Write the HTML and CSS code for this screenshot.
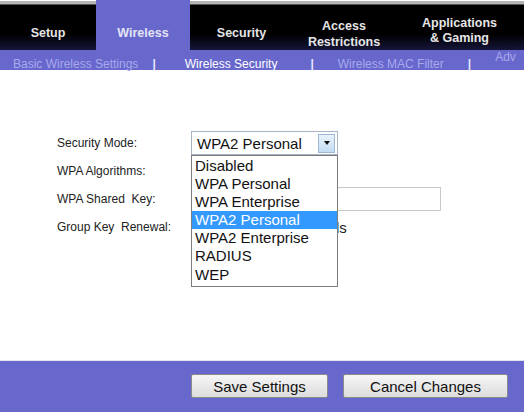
FILE: index.html
```html
<!DOCTYPE html>
<html>
<head>
<meta charset="utf-8">
<title>Wireless Security</title>
<link rel="stylesheet" href="styles.css">
</head>
<body>
<div class="page">
  <nav class="tabs">
    <div class="tab tab-setup">Setup</div>
    <div class="tab tab-wireless active">Wireless</div>
    <div class="tab tab-security">Security</div>
    <div class="tab tab-access">Access<br>Restrictions</div>
    <div class="tab tab-apps">Applications<br>&amp; Gaming</div>
  </nav>
  <div class="subnav">
    <span class="sub sub-basic">Basic Wireless Settings</span>
    <span class="sep sep-1">|</span>
    <span class="sub sub-current">Wireless Security</span>
    <span class="sep sep-2">|</span>
    <span class="sub sub-mac">Wireless MAC Filter</span>
    <span class="sep sep-3">|</span>
    <span class="sub sub-adv">Adv</span>
  </div>
  <main class="content">
    <div class="form">
      <div class="label">Security Mode:</div>
      <div class="field select-cell">
        <div class="select">
          <span class="select-value">WPA2 Personal</span>
          <span class="select-btn"><span class="arrow"></span></span>
        </div>
        <ul class="options">
          <li>Disabled</li>
          <li>WPA Personal</li>
          <li>WPA Enterprise</li>
          <li class="selected">WPA2 Personal</li>
          <li>WPA2 Enterprise</li>
          <li>RADIUS</li>
          <li>WEP</li>
        </ul>
      </div>
      <div class="label">WPA Algorithms:</div>
      <div class="field"></div>
      <div class="label">WPA Shared&nbsp; Key:</div>
      <div class="field"><div class="textbox"></div></div>
      <div class="label">Group Key&nbsp; Renewal:</div>
      <div class="field renewal"><span class="unit">seconds</span></div>
    </div>
  </main>
  <footer class="footer">
    <button class="btn btn-save">Save Settings</button>
    <button class="btn btn-cancel">Cancel Changes</button>
  </footer>
</div>
</body>
</html>
```
FILE: styles.css
```css
html, body {
  margin: 0;
  padding: 0;
  background: #fff;
}

.page {
  width: 524px;
  height: 412px;
  display: flex;
  flex-direction: column;
  overflow: hidden;
  font-family: "Liberation Sans", Arial, sans-serif;
}

/* top tab bar */
.tabs {
  height: 50px;
  flex: none;
  display: flex;
  background:
    linear-gradient(#fff 0 1px, #b4b4b4 1px 4px, #000 5px, #000 34px, #15153a 50px);
}

.tab {
  display: flex;
  align-items: center;
  justify-content: center;
  text-align: center;
  color: #e6e6e6;
  font-weight: bold;
  font-size: 12.5px;
  line-height: 15px;
  padding-top: 16px;
  box-sizing: border-box;
}

.tab-setup { width: 96px; }
.tab-wireless { width: 94px; }
.tab-security { width: 103px; }
.tab-access { width: 102px; padding-top: 17px; line-height: 16px; }
.tab-apps { width: 129px; padding-top: 12px; }

.tab.active {
  background: #6767cc;
  color: #e4e4f4;
}

/* second level links */
.subnav {
  height: 20px;
  flex: none;
  box-sizing: border-box;
  padding-top: 8px;
  background: #6767cc;
  display: flex;
  align-items: flex-start;
  font-size: 12px;
  line-height: 12px;
  color: #a9a9ee;
  white-space: nowrap;
}

.sub-basic { margin-left: 13px; }
.sep { color: #e8e8ff; font-weight: bold; }
.sep-1 { margin-left: 14px; }
.sub-current { margin-left: 29px; color: #fff; }
.sep-2 { margin-left: 33px; }
.sub-mac { margin-left: 24px; }
.sep-3 { margin-left: 24px; }
.sub-adv { margin-left: 24px; position: relative; top: -7px; }

/* form area */
.content {
  flex: 1;
  padding-top: 59px;
  box-sizing: border-box;
}

.form {
  display: grid;
  grid-template-columns: 134px 1fr;
  grid-auto-rows: 28px;
  margin-left: 57px;
}

.label {
  font-size: 12px;
  color: #222;
  display: flex;
  align-items: center;
  white-space: nowrap;
}

.field {
  display: flex;
  align-items: center;
  position: relative;
}

.select-cell { align-items: flex-start; padding-top: 2px; }

.select {
  width: 147px;
  height: 24px;
  box-sizing: border-box;
  border: 1px solid #a8b4c6;
  display: flex;
  align-items: center;
  background: #fff;
}

.select-value {
  flex: 1;
  font-size: 15px;
  padding-left: 5px;
  color: #111;
}

.select-btn {
  width: 17px;
  height: 19px;
  margin-right: 2px;
  box-sizing: border-box;
  border: 1px solid #9fb8d6;
  background: linear-gradient(#e8f2fc, #c4dcf4);
  display: flex;
  align-items: center;
  justify-content: center;
}

.arrow {
  width: 0;
  height: 0;
  border-left: 3.5px solid transparent;
  border-right: 3.5px solid transparent;
  border-top: 4px solid #111;
}

/* open option list drawn over the rows below */
.options {
  position: absolute;
  left: 0;
  top: 26px;
  z-index: 2;
  width: 147px;
  box-sizing: border-box;
  margin: 0;
  padding: 1px 0 2px;
  list-style: none;
  background: #fff;
  border: 1px solid #7c7c7c;
  font-size: 15px;
  color: #111;
}

.options li {
  height: 18.1px;
  line-height: 18px;
  padding-left: 3px;
}

.options li.selected {
  background: #3399ff;
  color: #fff;
}

.textbox {
  width: 250px;
  height: 24px;
  box-sizing: border-box;
  border: 1px solid #c8c8c8;
  background: #fff;
}

.renewal { padding-left: 100px; }

.unit {
  font-size: 15px;
  color: #222;
}

/* bottom button bar */
.footer {
  height: 52px;
  flex: none;
  background: #6767cc;
  border-top: 1px solid #e4e4f0;
  box-sizing: border-box;
  display: flex;
  align-items: flex-start;
  padding: 13px 0 0 191px;
  gap: 15px;
}

.btn {
  height: 24px;
  font-family: "Liberation Sans", Arial, sans-serif;
  font-size: 15px;
  color: #111;
  border: 1px solid #8a8a8a;
  border-radius: 2px;
  background: linear-gradient(#f6f6f6, #dcdcdc);
  padding: 0;
}

.btn-save { width: 137px; }
.btn-cancel { width: 165px; }
```
